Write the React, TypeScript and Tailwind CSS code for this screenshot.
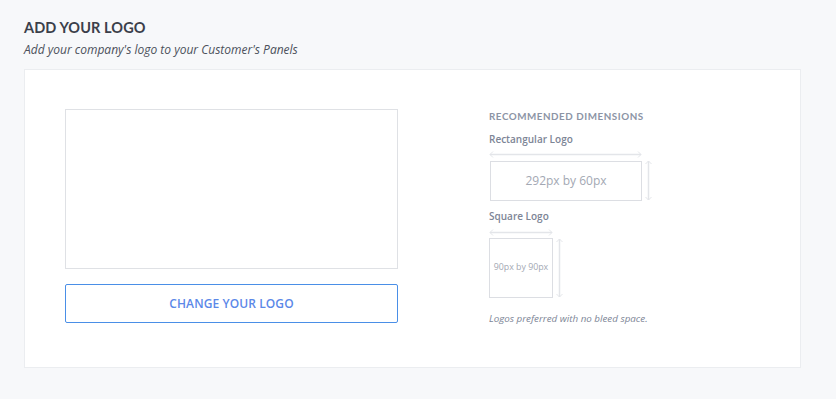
import React from "react";

function HArrow({ width }: { width: number }) {
  return (
    <svg width={width} height={7} viewBox={`0 0 ${width} 7`} className="block">
      <line x1={1} y1={3.5} x2={width - 1} y2={3.5} stroke="#e3e5e9" strokeWidth={1.5} />
      <polyline points="4,0.5 1,3.5 4,6.5" fill="none" stroke="#e3e5e9" strokeWidth={1} />
      <polyline points={`${width - 4},0.5 ${width - 1},3.5 ${width - 4},6.5`} fill="none" stroke="#e3e5e9" strokeWidth={1} />
    </svg>
  );
}

function VArrow({ height }: { height: number }) {
  return (
    <svg width={7} height={height} viewBox={`0 0 7 ${height}`} className="block">
      <line x1={3.5} y1={1} x2={3.5} y2={height - 1} stroke="#e3e5e9" strokeWidth={1.5} />
      <polyline points="0.5,4 3.5,1 6.5,4" fill="none" stroke="#e3e5e9" strokeWidth={1} />
      <polyline points={`0.5,${height - 4} 3.5,${height - 1} 6.5,${height - 4}`} fill="none" stroke="#e3e5e9" strokeWidth={1} />
    </svg>
  );
}

export default function App() {
  return (
    <div className="w-[836px] h-[399px] bg-[#f7f8fa] pl-6 pt-[18px] overflow-hidden">
      <h1 className="text-[14.5px] leading-[20px] font-bold text-[#3b3f4a] font-['Lato',sans-serif] tracking-[0.1px]">
        ADD YOUR LOGO
      </h1>
      <p className="mt-[3px] text-[12px] leading-[17px] italic text-[#4b505b] font-['Open_Sans',sans-serif]">
        Add your company's logo to your Customer's Panels
      </p>
      <div className="mt-[11px] w-[777px] h-[299px] bg-white border border-[#ebedf0] flex pl-[40px] pt-[39px]">
        <div className="w-[333px] flex flex-col">
          <div className="h-[160px] border border-[#dfe1e5]" />
          <button className="mt-[15px] h-[39px] border border-solid border-[color:#4a8fe7] rounded-[2px] text-[12px] font-semibold text-[#5b88e8] font-['Open_Sans',sans-serif] tracking-[0.1px]">
            CHANGE YOUR LOGO
          </button>
        </div>
        <div className="ml-[91px] flex flex-col font-['Open_Sans',sans-serif]">
          <div className="h-[14px] flex items-center text-[9.8px] font-bold tracking-[0.55px] text-[#8c94a5] font-['Lato',sans-serif]">
            RECOMMENDED DIMENSIONS
          </div>
          <div className="mt-[9px] text-[10px] leading-[14px] font-semibold text-[#7d8596]">
            Rectangular Logo
          </div>
          <div className="mt-[5px] flex">
            <div className="flex flex-col">
              <HArrow width={153} />
              <div className="mt-[3px] ml-[1px] w-[152px] h-[40px] border border-[#dcdee3] flex items-center justify-center text-[12px] text-[#a3a8b3]">
                292px by 60px
              </div>
            </div>
            <div className="ml-[3px] mt-[9px]">
              <VArrow height={41} />
            </div>
          </div>
          <div className="mt-[8px] text-[10px] leading-[14px] font-semibold text-[#7d8596]">
            Square Logo
          </div>
          <div className="mt-[6px] flex">
            <div className="flex flex-col">
              <HArrow width={64} />
              <div className="mt-[2px] w-[64px] h-[60px] border border-[#dcdee3] flex items-center justify-center text-[8.8px] text-[#a3a8b3]">
                90px by 90px
              </div>
            </div>
            <div className="ml-[3px] mt-[9px]">
              <VArrow height={60} />
            </div>
          </div>
          <div className="mt-[15px] text-[9.8px] leading-[12px] italic text-[#7d8596]">
            Logos preferred with no bleed space.
          </div>
        </div>
      </div>
    </div>
  );
}
